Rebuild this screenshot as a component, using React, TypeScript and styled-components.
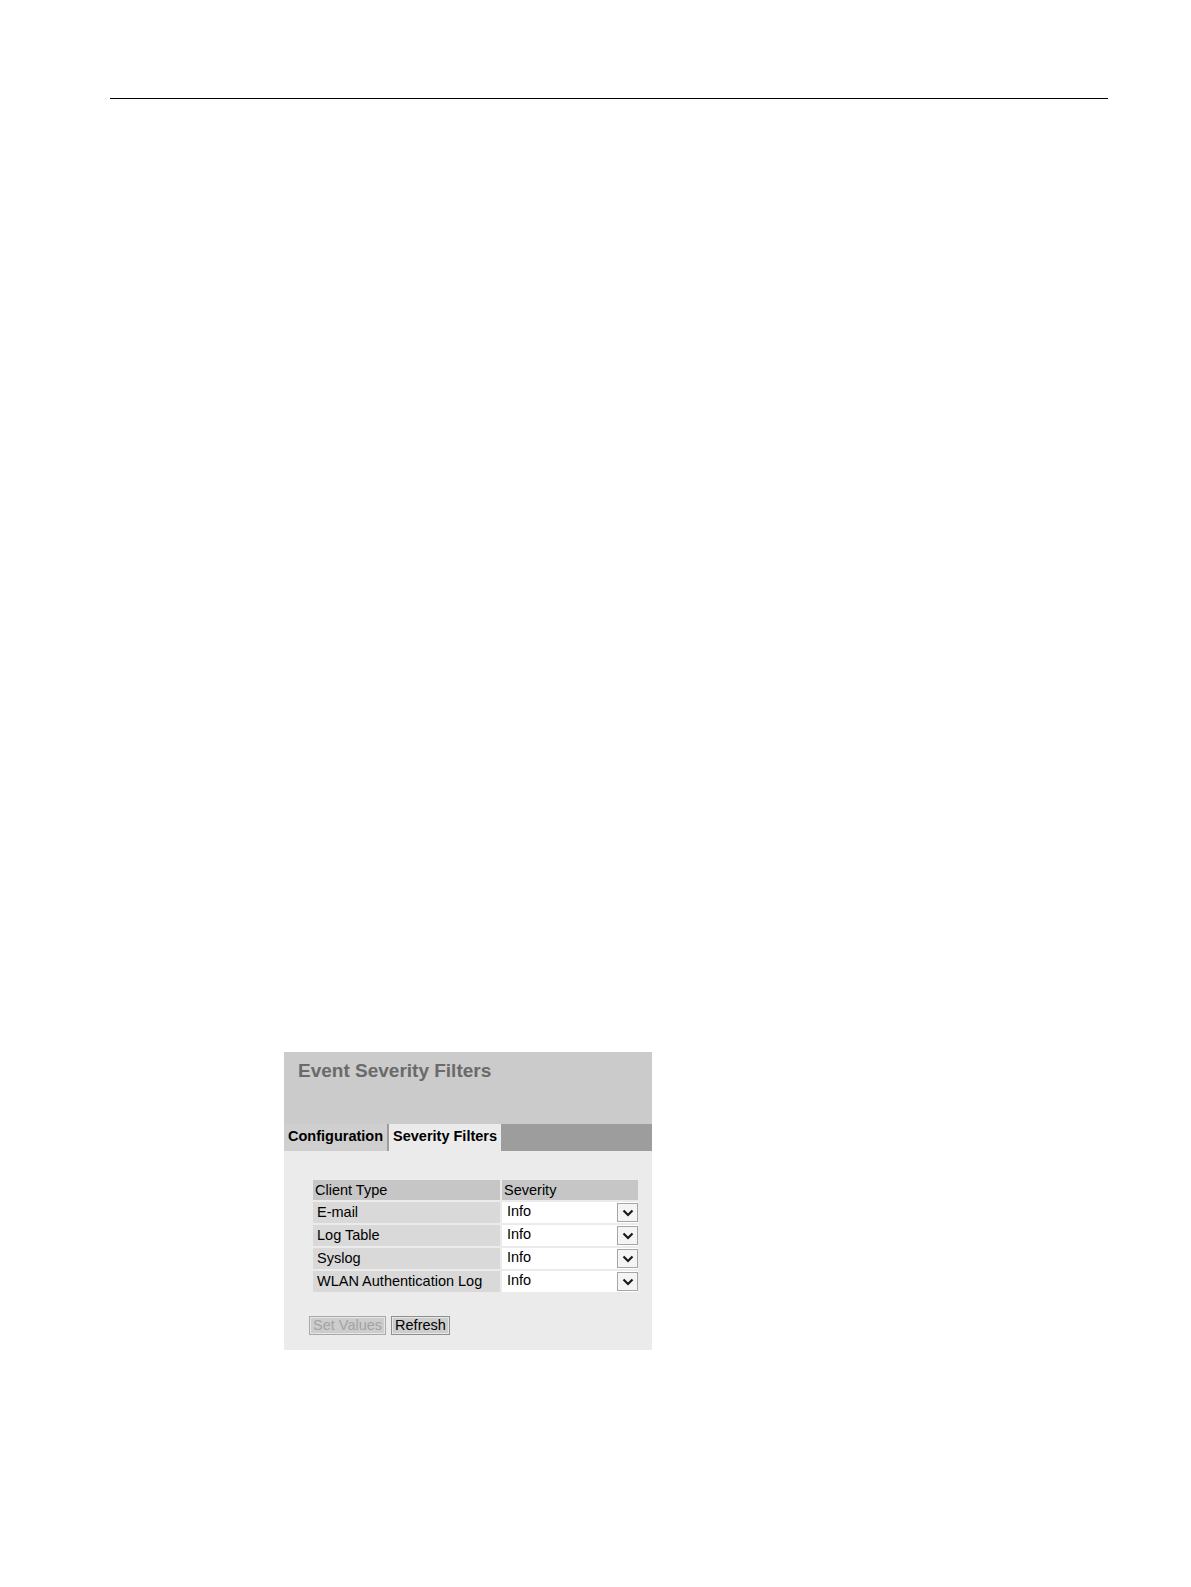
import React, { FunctionComponent, ReactElement } from 'react'
import styled, { createGlobalStyle } from 'styled-components'

interface FilterRow {
  client: string
  severity: string
}

const rows: FilterRow[] = [
  { client: 'E-mail', severity: 'Info' },
  { client: 'Log Table', severity: 'Info' },
  { client: 'Syslog', severity: 'Info' },
  { client: 'WLAN Authentication Log', severity: 'Info' },
]

const GlobalStyle = createGlobalStyle`
  html, body {
    margin: 0;
    padding: 0;
    background: #ffffff;
  }
  body {
    font-family: "Liberation Sans", Arial, sans-serif;
    color: #000;
  }
`

const Chevron: FunctionComponent = (): ReactElement => (
  <svg width="12" height="8" viewBox="0 0 12 8">
    <path d="M1.5 1.5 L6 6 L10.5 1.5" fill="none" stroke="#1a1a1a" strokeWidth="2.2" />
  </svg>
)

const App: FunctionComponent = (): ReactElement => {
  return (
    <>
      <GlobalStyle />
      <Page>
        <Rule />
        <Panel>
          <Header>
            <Title>Event Severity Filters</Title>
          </Header>
          <TabBar>
            <Tab>Configuration</Tab>
            <Tab active>Severity Filters</Tab>
          </TabBar>
          <Content>
            <FilterTable>
              <thead>
                <tr>
                  <HeadCell>Client Type</HeadCell>
                  <HeadCell>Severity</HeadCell>
                </tr>
              </thead>
              <tbody>
                {rows.map((row, index) => (
                  <tr key={index}>
                    <LabelCell>{row.client}</LabelCell>
                    <SelectCell>
                      <SelectBox>
                        <SelectValue>{row.severity}</SelectValue>
                        <ArrowButton>
                          <Chevron />
                        </ArrowButton>
                      </SelectBox>
                    </SelectCell>
                  </tr>
                ))}
              </tbody>
            </FilterTable>
            <ButtonRow>
              <Button disabled>Set Values</Button>
              <Button>Refresh</Button>
            </ButtonRow>
          </Content>
        </Panel>
      </Page>
    </>
  )
}

const Page = styled.div`
  padding-top: 98px;
  min-height: 1587px;
  box-sizing: border-box;
`

const Rule = styled.div`
  margin: 0 83px 0 110px;
  height: 1px;
  background: #000;
`

const Panel = styled.div`
  margin: 953px 0 0 284px;
  width: 368px;
`

const Header = styled.div`
  height: 72px;
  background: #cbcbcb;
  padding: 7px 0 0 14px;
  box-sizing: border-box;
`

const Title = styled.div`
  font-size: 19px;
  font-weight: bold;
  color: #6a6a6a;
  line-height: 24px;
`

const TabBar = styled.div`
  display: flex;
  height: 27px;
  background: #9d9d9d;
`

const Tab = styled.div<{ active?: boolean }>`
  display: flex;
  align-items: center;
  padding: 0 4px 3px 4px;
  margin-right: 2px;
  font-size: 14.5px;
  font-weight: bold;
  background: ${({ active }) => (active ? '#ebebeb' : '#cfcfcf')};
`

const Content = styled.div`
  background: #ebebeb;
  padding: 27px 14px 15px 25px;
`

const FilterTable = styled.table`
  border-collapse: separate;
  border-spacing: 2px;
  width: 329px;
  margin-left: 2px;
  font-size: 14.5px;
`

const HeadCell = styled.th`
  background: #c6c6c6;
  text-align: left;
  font-weight: normal;
  padding: 0 2px;
  height: 20px;
  line-height: 20px;
  &:first-child {
    width: 183px;
  }
`

const LabelCell = styled.td`
  background: #d9d9d9;
  padding: 0 4px;
  height: 21px;
  line-height: 21px;
  white-space: nowrap;
`

const SelectCell = styled.td`
  padding: 0;
  height: 21px;
`

const SelectBox = styled.div`
  display: flex;
  align-items: stretch;
  height: 21px;
  background: #fff;
`

const SelectValue = styled.div`
  flex: 1;
  padding: 0 5px;
  line-height: 18px;
`

const ArrowButton = styled.div`
  width: 21px;
  margin: 1px 0;
  display: flex;
  align-items: center;
  justify-content: center;
  border: 1px solid #a6a6a6;
  background: #f4f4f4;
  box-sizing: border-box;
`

const ButtonRow = styled.div`
  display: flex;
  gap: 5px;
  margin-top: 22px;
`

const Button = styled.button`
  font-family: "Liberation Sans", Arial, sans-serif;
  font-size: 14.5px;
  height: 19px;
  line-height: 15px;
  padding: 0 3px;
  border: 1px solid #8f8f8f;
  box-shadow: inset 0 0 0 1px #e6e6e6;
  background: #cdcdcd;
  color: #000;
  &:disabled {
    color: #a3a3a3;
    border-color: #a9a9a9;
  }
`

export default App
